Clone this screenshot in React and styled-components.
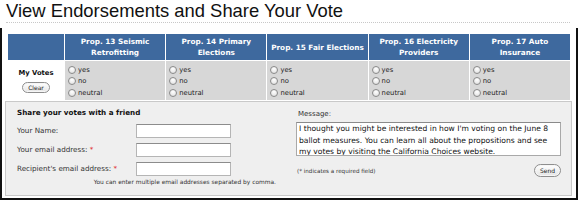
import React from "react";
import styled, { createGlobalStyle } from "styled-components";

const GlobalStyle = createGlobalStyle`
  html, body {
    margin: 0;
    padding: 0;
    background: #fff;
  }
  body {
    width: 578px;
    height: 200px;
    overflow: hidden;
    font-family: "DejaVu Sans", Verdana, sans-serif;
    color: #222;
  }
`;

const Page = styled.div`
  width: 578px;
  height: 200px;
  display: flex;
  flex-direction: column;
`;

const Header = styled.div`
  height: 22px;
  margin: 0 8px 0 6px;
  border-bottom: 1px dotted #c8c8c8;
`;

const Title = styled.h1`
  margin: 0;
  padding-top: 1px;
  font-family: "Liberation Sans", Arial, sans-serif;
  font-size: 18.4px;
  font-weight: normal;
  line-height: 20px;
  color: #111;
`;

const Frame = styled.div`
  margin-top: 5px;
  flex: 1;
  border: 2px solid #111;
  border-top: none;
  padding: 6px 6px 2px 6px;
  display: flex;
  flex-direction: column;
`;

const VoteGrid = styled.div`
  width: 562px;
  display: grid;
  grid-template-columns: 56px repeat(5, 1fr);
  grid-template-rows: 26px 39px;
  gap: 1px;
  background: #fff;
`;

const HeadCell = styled.div`
  background: #3e699e;
  color: #fff;
  font-weight: bold;
  font-size: 7.3px;
  line-height: 11px;
  display: flex;
  align-items: center;
  justify-content: center;
  text-align: center;
`;

const LabelCell = styled.div`
  background: #fff;
  display: flex;
  flex-direction: column;
  align-items: center;
  padding-top: 8px;
  gap: 5px;
`;

const MyVotes = styled.div`
  font-weight: bold;
  font-size: 6.8px;
  line-height: 8px;
  color: #111;
`;

const PillButton = styled.button`
  font-family: "DejaVu Sans", Verdana, sans-serif;
  font-size: 6px;
  line-height: 8px;
  color: #222;
  padding: 1px 5px;
  height: ${(p) => p.$h}px;
  border: 1px solid #8e8e8e;
  border-radius: 7px;
  background: linear-gradient(#ffffff, #e4e4e4);
  box-shadow: inset 0 0 0 1px #f6f6f6;
  cursor: pointer;
`;

const VoteCell = styled.div`
  background: #d7d7d7;
  padding: 3px 0 0 3px;
  display: flex;
  flex-direction: column;
`;

const RadioRow = styled.label`
  display: flex;
  align-items: center;
  height: 11.5px;
  font-size: 6.8px;
  color: #222;
`;

const RadioDot = styled.span`
  display: inline-block;
  box-sizing: border-box;
  width: 8px;
  height: 8px;
  border-radius: 50%;
  border: 1px solid #8a8a8a;
  background: radial-gradient(circle at 50% 30%, #ffffff, #dcdcdc);
  margin-right: 2px;
`;

const SharePanel = styled.div`
  margin: 1px -2px 0 -3px;
  flex: 1;
  border: 1px solid #c9c9c9;
  background: #efefef;
  padding: 6px 10px 0 11px;
  display: grid;
  grid-template-columns: 259px 1fr;
  column-gap: 20px;
`;

const LeftCol = styled.div`
  display: flex;
  flex-direction: column;
`;

const ShareHeading = styled.div`
  font-weight: bold;
  font-size: 7.2px;
  line-height: 10px;
  color: #111;
  margin-bottom: 6px;
`;

const FieldRow = styled.div`
  display: grid;
  grid-template-columns: 119px 95px;
  align-items: center;
  height: 14px;
  margin-bottom: 5px;
`;

const FieldLabel = styled.label`
  font-size: 7.2px;
  color: #333;
  margin-top: -2px;
`;

const Req = styled.span`
  color: #e0312f;
`;

const TextInput = styled.input`
  box-sizing: border-box;
  width: 95px;
  height: 14px;
  border: 1px solid #b5b5b5;
  border-top-color: #8c8c8c;
  background: #fff;
  padding: 0 2px;
  font-size: 7px;
`;

const Note = styled.div`
  font-size: 5.9px;
  color: #333;
  text-align: right;
  margin-top: -2px;
`;

const RightCol = styled.div`
  display: flex;
  flex-direction: column;
  padding-top: 2px;
`;

const MsgLabel = styled.label`
  font-size: 7px;
  line-height: 9px;
  color: #333;
  margin: 0 0 3px 2px;
`;

const MsgBox = styled.textarea`
  box-sizing: border-box;
  width: 265px;
  height: 34px;
  resize: none;
  overflow: hidden;
  border: 1px solid #a9a9a9;
  border-top-color: #8a8a8a;
  background: #fff;
  padding: 0 2px;
  margin: 0;
  font-family: "DejaVu Sans", Verdana, sans-serif;
  font-size: 7.6px;
  line-height: 11.5px;
  color: #111;
`;

const FootRow = styled.div`
  display: flex;
  justify-content: space-between;
  align-items: center;
  margin-top: 8px;
`;

const Hint = styled.span`
  font-size: 5.6px;
  color: #333;
  margin-left: 1px;
`;

const props = [
  ["Prop. 13 Seismic", "Retrofitting"],
  ["Prop. 14 Primary", "Elections"],
  ["Prop. 15 Fair Elections"],
  ["Prop. 16 Electricity", "Providers"],
  ["Prop. 17 Auto", "Insurance"],
];

const choices = ["yes", "no", "neutral"];

export default function App() {
  return (
    <>
      <GlobalStyle />
      <Page>
        <Header>
          <Title>View Endorsements and Share Your Vote</Title>
        </Header>
        <Frame>
          <VoteGrid>
            <HeadCell />
            {props.map((lines, i) => (
              <HeadCell key={i}>
                <div>
                  {lines.map((l, j) => (
                    <div key={j}>{l}</div>
                  ))}
                </div>
              </HeadCell>
            ))}
            <LabelCell>
              <MyVotes>My Votes</MyVotes>
              <PillButton $h={11}>Clear</PillButton>
            </LabelCell>
            {props.map((_, i) => (
              <VoteCell key={i}>
                {choices.map((c) => (
                  <RadioRow key={c}>
                    <RadioDot />
                    {c}
                  </RadioRow>
                ))}
              </VoteCell>
            ))}
          </VoteGrid>
          <SharePanel>
            <LeftCol>
              <ShareHeading>Share your votes with a friend</ShareHeading>
              <FieldRow>
                <FieldLabel>Your Name:</FieldLabel>
                <TextInput />
              </FieldRow>
              <FieldRow>
                <FieldLabel>
                  Your email address: <Req>*</Req>
                </FieldLabel>
                <TextInput />
              </FieldRow>
              <FieldRow>
                <FieldLabel>
                  Recipient's email address: <Req>*</Req>
                </FieldLabel>
                <TextInput />
              </FieldRow>
              <Note>You can enter multiple email addresses separated by comma.</Note>
            </LeftCol>
            <RightCol>
              <MsgLabel>Message:</MsgLabel>
              <MsgBox
                defaultValue="I thought you might be interested in how I'm voting on the June 8 ballot measures. You can learn all about the propositions and see my votes by visiting the California Choices website."
              />
              <FootRow>
                <Hint>(* indicates a required field)</Hint>
                <PillButton $h={13}>Send</PillButton>
              </FootRow>
            </RightCol>
          </SharePanel>
        </Frame>
      </Page>
    </>
  );
}
